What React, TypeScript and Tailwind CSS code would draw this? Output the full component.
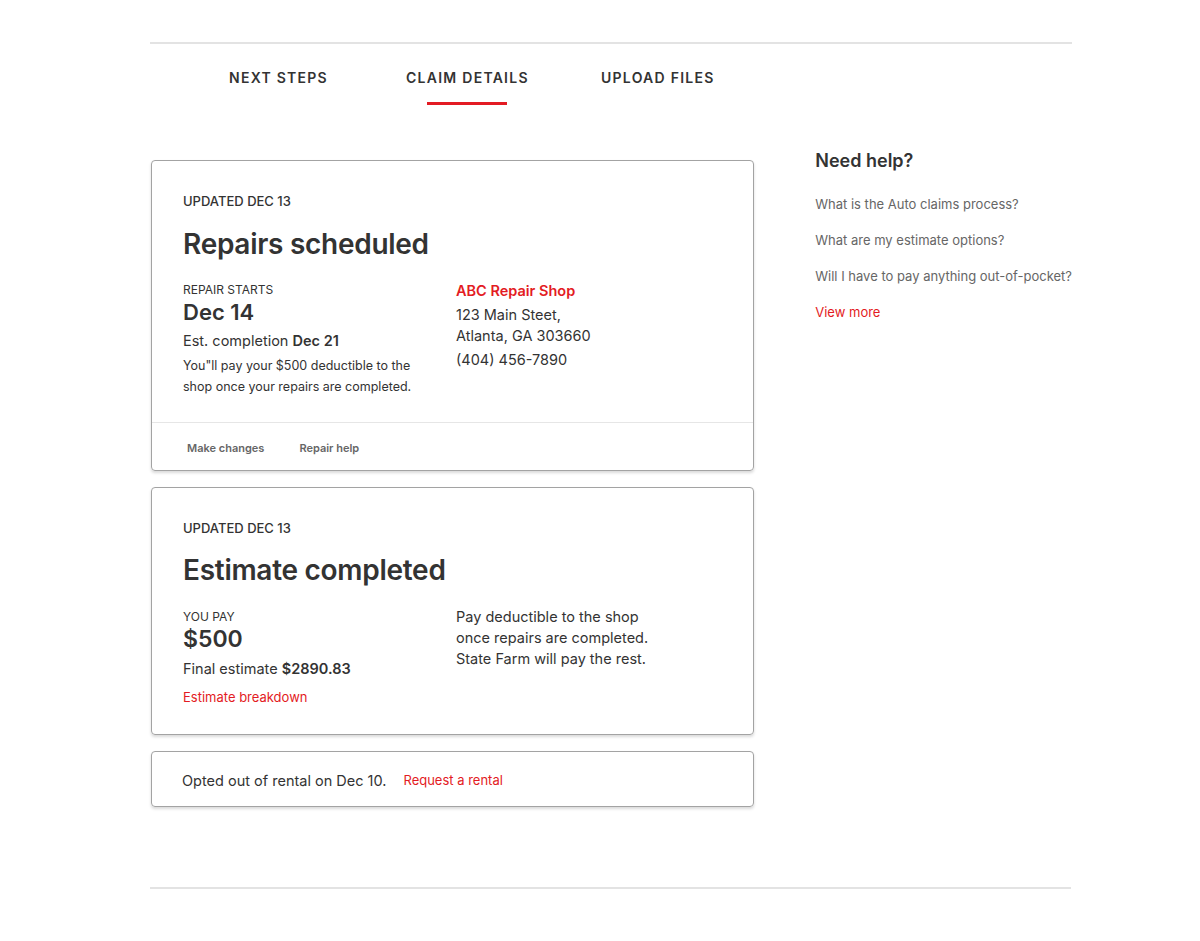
export default function App() {
  const tabs = [
    { label: "NEXT STEPS", w: "w-[177px]", active: false },
    { label: "CLAIM DETAILS", w: "w-[195px]", active: true },
    { label: "UPLOAD FILES", w: "w-[160px]", active: false },
  ];

  const help = [
    "What is the Auto claims process?",
    "What are my estimate options?",
    "Will I have to pay anything out-of-pocket?",
  ];

  return (
    <div
      className="min-h-[941px] bg-white text-[#333]"
      style={{ fontFamily: "Inter, 'Liberation Sans', sans-serif" }}
    >
      <div className="ml-[150px] w-[922px]">
        <div className="h-[42px]" />
        <div className="h-[2px] bg-[#e3e3e3]" />

        {/* tabs */}
        <div className="flex pl-[79px] pt-[21px]">
          {tabs.map((t) => (
            <div key={t.label} className={t.w}>
              <div className="inline-flex flex-col items-center">
                <span className="text-[14px] leading-[20px] font-semibold tracking-[0.09em] text-[#333]">
                  {t.label}
                </span>
                <div
                  className={
                    t.active
                      ? "mt-[14px] h-[3px] w-[80px] bg-[#e31b23]"
                      : "mt-[14px] h-[3px] w-[80px]"
                  }
                />
              </div>
            </div>
          ))}
        </div>

        <div className="mt-[55px] flex">
          {/* cards column */}
          <div className="ml-[1px] flex w-[604px] flex-col gap-[16px]">
            {/* card 1 */}
            <div className="rounded-[4px] border border-[#a3a3a3] shadow-[0_2px_3px_rgba(0,0,0,0.15)]">
              <div className="px-[31px] pt-[31px] pb-[25px]">
                <div className="text-[13px] leading-[18px] font-medium">UPDATED DEC 13</div>
                <h2 className="mt-[16px] text-[28px] leading-[36px] font-semibold tracking-[-0.01em]">
                  Repairs scheduled
                </h2>
                <div className="mt-[20px] flex">
                  <div className="w-[273px]">
                    <div className="text-[12px] leading-[16px]">REPAIR STARTS</div>
                    <div className="mt-[1px] text-[22px] leading-[26px] font-semibold">Dec 14</div>
                    <div className="mt-[6px] text-[14.5px] leading-[20px]">
                      Est. completion <span className="font-semibold">Dec 21</span>
                    </div>
                    <div className="mt-[4px] text-[12.5px] leading-[21px]">
                      You"ll pay your $500 deductible to the
                      <br />
                      shop once your repairs are completed.
                    </div>
                  </div>
                  <div className="flex-1">
                    <div className="-mt-[1px] text-[14.5px] leading-[20px] font-semibold text-[#e31b23]">
                      ABC Repair Shop
                    </div>
                    <div className="mt-[3px] text-[14.5px] leading-[21px]">
                      123 Main Steet,
                      <br />
                      Atlanta, GA 303660
                    </div>
                    <div className="mt-[4px] text-[14.5px] leading-[20px]">(404) 456-7890</div>
                  </div>
                </div>
              </div>
              <div className="flex h-[48px] items-center gap-[35px] border-t border-[#e6e6e6] px-[35px] pt-[3px] text-[11px] font-semibold text-[#666]">
                <span>Make changes</span>
                <span>Repair help</span>
              </div>
            </div>

            {/* card 2 */}
            <div className="rounded-[4px] border border-[#a3a3a3] px-[31px] pt-[31px] pb-[28px] shadow-[0_2px_3px_rgba(0,0,0,0.15)]">
              <div className="text-[13px] leading-[18px] font-medium">UPDATED DEC 13</div>
              <h2 className="mt-[15px] text-[28px] leading-[36px] font-semibold tracking-[-0.01em]">
                Estimate completed
              </h2>
              <div className="mt-[21px] flex">
                <div className="w-[273px]">
                  <div className="text-[12px] leading-[16px]">YOU PAY</div>
                  <div className="mt-[1px] text-[23px] leading-[26px] font-semibold">$500</div>
                  <div className="mt-[7px] text-[14.5px] leading-[20px]">
                    Final estimate <span className="font-semibold">$2890.83</span>
                  </div>
                  <div className="mt-[9px] text-[13px] leading-[18px] text-[#e31b23]">
                    Estimate breakdown
                  </div>
                </div>
                <div className="-mt-[3px] flex-1 text-[14.5px] leading-[21px]">
                  Pay deductible to the shop
                  <br />
                  once repairs are completed.
                  <br />
                  State Farm will pay the rest.
                </div>
              </div>
            </div>

            {/* card 3 */}
            <div className="flex h-[56px] items-center rounded-[4px] border border-[#a3a3a3] px-[30px] pt-[3px] shadow-[0_2px_3px_rgba(0,0,0,0.15)]">
              <span className="text-[14.5px]">Opted out of rental on Dec 10.</span>
              <span className="ml-[17px] text-[13px] text-[#e31b23]">Request a rental</span>
            </div>
          </div>

          {/* sidebar */}
          <div className="ml-[61px] -mt-[11px] whitespace-nowrap">
            <h3 className="text-[18px] leading-[24px] font-semibold">Need help?</h3>
            <div className="mt-[22px] flex flex-col gap-[18px]">
              {help.map((h) => (
                <div key={h} className="text-[13px] leading-[18px] text-[#666]">
                  {h}
                </div>
              ))}
              <div className="text-[13px] leading-[18px] text-[#e31b23]">View more</div>
            </div>
          </div>
        </div>

        <div className="mt-[80px] h-[2px] w-[921px] bg-[#e3e3e3]" />
      </div>
    </div>
  );
}
